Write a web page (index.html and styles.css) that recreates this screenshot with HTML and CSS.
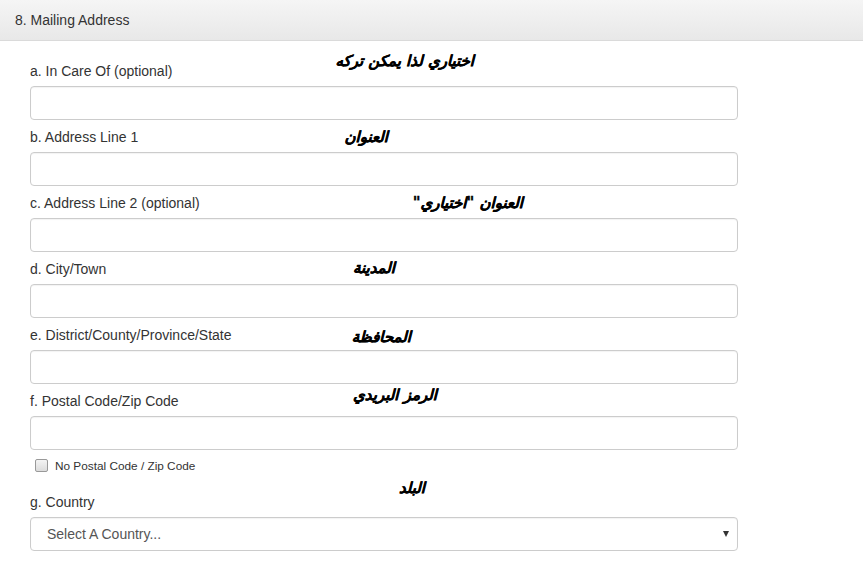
FILE: index.html
```html
<!DOCTYPE html>
<html lang="en">
<head>
<meta charset="utf-8">
<title>Mailing Address</title>
<link rel="stylesheet" href="styles.css">
</head>
<body>
<div class="panel">
  <div class="panel-heading">8. Mailing Address</div>
  <div class="panel-body">
    <div class="form-group">
      <label class="lbl">a. In Care Of (optional)</label>
      <span class="note note-a" dir="rtl">اختياري لذا يمكن تركه</span>
      <div class="input"></div>
    </div>
    <div class="form-group">
      <label class="lbl">b. Address Line 1</label>
      <span class="note note-b" dir="rtl">العنوان</span>
      <div class="input"></div>
    </div>
    <div class="form-group">
      <label class="lbl">c. Address Line 2 (optional)</label>
      <span class="note note-c" dir="rtl">العنوان "اختياري"</span>
      <div class="input"></div>
    </div>
    <div class="form-group">
      <label class="lbl">d. City/Town</label>
      <span class="note note-d" dir="rtl">المدينة</span>
      <div class="input"></div>
    </div>
    <div class="form-group">
      <label class="lbl">e. District/County/Province/State</label>
      <span class="note note-e" dir="rtl">المحافظة</span>
      <div class="input"></div>
    </div>
    <div class="form-group tight">
      <label class="lbl">f. Postal Code/Zip Code</label>
      <span class="note note-f" dir="rtl">الرمز البريدي</span>
      <div class="input"></div>
    </div>
    <div class="checkbox">
      <span class="box"></span>
      <span class="cb-text">No Postal Code / Zip Code</span>
    </div>
    <div class="form-group">
      <label class="lbl">g. Country</label>
      <span class="note note-g" dir="rtl">البلد</span>
      <div class="input select">
        <span class="sel-text">Select A Country...</span>
        <span class="caret"></span>
      </div>
    </div>
  </div>
</div>
</body>
</html>
```
FILE: styles.css
```css
html, body {
  margin: 0;
  padding: 0;
  background: #fff;
}
body {
  font-family: "Liberation Sans", Arial, sans-serif;
  font-size: 14px;
  color: #333;
}
.panel-heading {
  height: 41px;
  box-sizing: border-box;
  padding: 10px 15px;
  line-height: 20px;
  font-size: 14px;
  color: #333;
  background: linear-gradient(to bottom, #f5f5f5 0%, #e8e8e8 100%);
  border-bottom: 1px solid #dadada;
}
.panel-body {
  padding: 20px 30px 0 30px;
  width: 708px;
}
.form-group {
  position: relative;
  margin-bottom: 7px;
}
.form-group.tight {
  margin-bottom: 0;
}
.lbl {
  display: block;
  line-height: 20px;
  margin-bottom: 5px;
  font-size: 14px;
  color: #333;
}
.input {
  height: 34px;
  box-sizing: border-box;
  border: 1px solid #ccc;
  border-radius: 4px;
  background: #fff;
  box-shadow: inset 0 1px 1px rgba(0,0,0,0.05);
}
.select {
  display: flex;
  align-items: center;
  justify-content: space-between;
  padding: 0 8px 0 16px;
}
.sel-text {
  color: #555;
  font-size: 14px;
}
.caret {
  width: 0;
  height: 0;
  border-left: 3.5px solid transparent;
  border-right: 3.5px solid transparent;
  border-top: 6px solid #333;
}
.checkbox {
  display: flex;
  align-items: center;
  margin: 7px 0 18px 5px;
  height: 17px;
}
.box {
  width: 11px;
  height: 11px;
  border: 1px solid #999;
  border-radius: 2px;
  background: linear-gradient(to bottom, #f4f4f4, #dcdcdc);
  margin-right: 7px;
}
.cb-text {
  font-size: 11.8px;
  color: #333;
}
.note {
  position: absolute;
  font-family: "DejaVu Sans", sans-serif;
  font-weight: bold;
  font-style: italic;
  font-size: 15px;
  color: #000;
  white-space: nowrap;
  line-height: 20px;
  -webkit-text-stroke: 0.3px #000;
}
.note-a { right: 264px; top: -10px; }
.note-b { right: 350px; top: 0; }
.note-c { right: 215px; top: 0; }
.note-d { right: 343px; top: -1px; }
.note-e { right: 327px; top: 2px; }
.note-f { right: 301px; top: -6px; }
.note-g { right: 313px; top: -14px; }
```
